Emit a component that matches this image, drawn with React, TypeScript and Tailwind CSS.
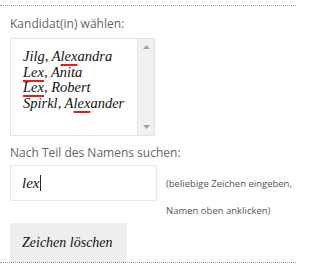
const names = [
  { before: 'Jilg, A', hit: 'lex', after: 'andra' },
  { before: '', hit: 'Lex', after: ', Anita' },
  { before: '', hit: 'Lex', after: ', Robert' },
  { before: 'Spirkl, A', hit: 'lex', after: 'ander' },
];

const serif = "font-['Liberation_Serif',serif] italic";
const sans = "font-['Open_Sans',sans-serif]";

const App = () => {
  return (
    <div className="w-[300px] h-[267px] bg-white pt-[5px]">
      <div className="w-[296px] border-t border-dotted border-[#9a9a9a]" />

      <div className="pl-[10px]">
        {/* Candidate list */}
        <div className={`${sans} mt-[11px] text-[12px] leading-[14px] text-[#666]`}>Kandidat(in) wählen:</div>
        <div className="mt-[7px] flex w-[145px] h-[98px] border border-[#e2e2e2] bg-white">
          <div className={`${serif} flex-1 pl-[12px] pt-[10px] text-[14.5px] leading-[15.5px] text-[#111]`}>
            {names.map((n, i) => (
              <div key={i} className="whitespace-nowrap">
                {n.before}
                <span className="underline decoration-[#e0201a] decoration-2 underline-offset-[3px]">{n.hit}</span>
                {n.after}
              </div>
            ))}
          </div>
          <div className="w-[17px] bg-[#f1f1f1] border-l border-[#e6e6e6] flex flex-col items-center justify-between py-[6px]">
            <svg width="7" height="4" viewBox="0 0 7 4">
              <path d="M3.5 0 L7 4 L0 4 Z" fill="#a3a3a3" />
            </svg>
            <svg width="7" height="4" viewBox="0 0 7 4">
              <path d="M0 0 L7 0 L3.5 4 Z" fill="#a3a3a3" />
            </svg>
          </div>
        </div>

        {/* Search */}
        <div className={`${sans} mt-[10px] text-[12px] leading-[14px] text-[#666]`}>Nach Teil des Namens suchen:</div>
        <div className="mt-[5px] flex items-start">
          <div className="w-[147px] h-[36px] border border-[#e8e8e8] flex items-center pl-[11px]">
            <span className={`${serif} text-[15px] text-[#111]`}>lex</span>
            <span className="w-px h-[16px] bg-[#222] ml-[1px]" />
          </div>
          <div className={`${sans} ml-[9px] mt-[5px] text-[9.5px] leading-[27px] text-[#555]`}>
            <div>(beliebige Zeichen eingeben,</div>
            <div>Namen oben anklicken)</div>
          </div>
        </div>

        <button className={`${serif} mt-[-1px] w-[117px] h-[39px] bg-[#eeeeee] text-[14px] text-[#111] text-left pl-[12px]`}>
          Zeichen löschen
        </button>
      </div>

      <div className="w-[296px] border-t border-dotted border-[#9a9a9a]" />
    </div>
  );
};

export default App;
